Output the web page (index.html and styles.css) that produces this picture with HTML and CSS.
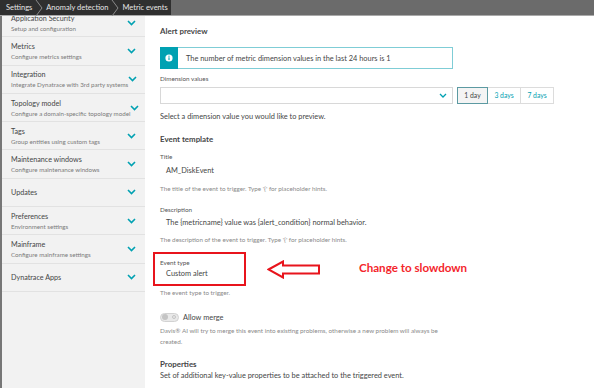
FILE: index.html
```html
<html>
    <head>
        <title>Metric events</title>
        <link rel="stylesheet" href="styles.css">
    </head>
    <body>
        <div class="topbar">
            <nav class="crumbs">
                <span class="crumb">Settings</span>
                <svg class="crumb-sep" width="8" height="16" viewBox="0 0 8 16"><polyline points="1,0 7,8 1,16" fill="none" stroke="#8a8a8a" stroke-width="1"/></svg>
                <span class="crumb">Anomaly detection</span>
                <svg class="crumb-sep" width="8" height="16" viewBox="0 0 8 16"><polyline points="1,0 7,8 1,16" fill="none" stroke="#8a8a8a" stroke-width="1"/></svg>
                <span class="crumb last">Metric events</span>
            </nav>
        </div>
        <div class="page">
            <aside class="sidebar">
                <ul class="menu">
                    <li class="menu-item">
                        <div><div class="menu-title">Application Security</div><div class="menu-sub">Setup and configuration</div></div>
                        <svg class="chev" width="9" height="6" viewBox="0 0 9 6"><polyline points="1,1 4.5,4.5 8,1" fill="none" stroke="#00a1b2" stroke-width="1.6"/></svg>
                    </li>
                    <li class="menu-item">
                        <div><div class="menu-title">Metrics</div><div class="menu-sub">Configure metrics settings</div></div>
                        <svg class="chev" width="9" height="6" viewBox="0 0 9 6"><polyline points="1,1 4.5,4.5 8,1" fill="none" stroke="#00a1b2" stroke-width="1.6"/></svg>
                    </li>
                    <li class="menu-item">
                        <div><div class="menu-title">Integration</div><div class="menu-sub">Integrate Dynatrace with 3rd party systems</div></div>
                        <svg class="chev" width="9" height="6" viewBox="0 0 9 6"><polyline points="1,1 4.5,4.5 8,1" fill="none" stroke="#00a1b2" stroke-width="1.6"/></svg>
                    </li>
                    <li class="menu-item">
                        <div><div class="menu-title">Topology model</div><div class="menu-sub">Configure a domain-specific topology model</div></div>
                        <svg class="chev" width="9" height="6" viewBox="0 0 9 6"><polyline points="1,1 4.5,4.5 8,1" fill="none" stroke="#00a1b2" stroke-width="1.6"/></svg>
                    </li>
                    <li class="menu-item">
                        <div><div class="menu-title">Tags</div><div class="menu-sub">Group entities using custom tags</div></div>
                        <svg class="chev" width="9" height="6" viewBox="0 0 9 6"><polyline points="1,1 4.5,4.5 8,1" fill="none" stroke="#00a1b2" stroke-width="1.6"/></svg>
                    </li>
                    <li class="menu-item">
                        <div><div class="menu-title">Maintenance windows</div><div class="menu-sub">Configure maintenance windows</div></div>
                        <svg class="chev" width="9" height="6" viewBox="0 0 9 6"><polyline points="1,1 4.5,4.5 8,1" fill="none" stroke="#00a1b2" stroke-width="1.6"/></svg>
                    </li>
                    <li class="menu-item">
                        <div><div class="menu-title">Updates</div></div>
                        <svg class="chev" width="9" height="6" viewBox="0 0 9 6"><polyline points="1,1 4.5,4.5 8,1" fill="none" stroke="#00a1b2" stroke-width="1.6"/></svg>
                    </li>
                    <li class="menu-item">
                        <div><div class="menu-title">Preferences</div><div class="menu-sub">Environment settings</div></div>
                        <svg class="chev" width="9" height="6" viewBox="0 0 9 6"><polyline points="1,1 4.5,4.5 8,1" fill="none" stroke="#00a1b2" stroke-width="1.6"/></svg>
                    </li>
                    <li class="menu-item">
                        <div><div class="menu-title">Mainframe</div><div class="menu-sub">Configure mainframe settings</div></div>
                        <svg class="chev" width="9" height="6" viewBox="0 0 9 6"><polyline points="1,1 4.5,4.5 8,1" fill="none" stroke="#00a1b2" stroke-width="1.6"/></svg>
                    </li>
                    <li class="menu-item">
                        <div><div class="menu-title">Dynatrace Apps</div></div>
                        <svg class="chev" width="9" height="6" viewBox="0 0 9 6"><polyline points="1,1 4.5,4.5 8,1" fill="none" stroke="#00a1b2" stroke-width="1.6"/></svg>
                    </li>
                </ul>
            </aside>
            <main class="content">
                <h3 class="section-title">Alert preview</h3>
                <div class="info-box">
                    <div class="info-icon">
                        <svg width="8" height="8" viewBox="0 0 8 8"><circle cx="4" cy="4" r="3.6" fill="#fff"/><rect x="3.45" y="3.3" width="1.1" height="2.8" fill="#00a1b2"/><circle cx="4" cy="2.2" r="0.6" fill="#00a1b2"/></svg>
                    </div>
                    <div class="info-text">The number of metric dimension values in the last 24 hours is 1</div>
                </div>
                <div class="label label-dim">Dimension values</div>
                <div class="select-row">
                    <div class="select">
                        <svg width="8" height="5" viewBox="0 0 8 5"><polyline points="1,1 4,4 7,1" fill="none" stroke="#00a1b2" stroke-width="1.3"/></svg>
                    </div>
                    <div class="range">
                        <span class="range-btn active">1 day</span>
                        <span class="range-btn">3 days</span>
                        <span class="range-btn">7 days</span>
                    </div>
                </div>
                <p class="text text-select">Select a dimension value you would like to preview.</p>

                <h3 class="section-title section-event">Event template</h3>
                <div class="label label-title">Title</div>
                <div class="value value-title">AM_DiskEvent</div>
                <div class="hint hint-title">The title of the event to trigger. Type '{' for placeholder hints.</div>

                <div class="label label-desc">Description</div>
                <div class="value value-desc">The {metricname} value was {alert_condition} normal behavior.</div>
                <div class="hint hint-desc">The description of the event to trigger. Type '{' for placeholder hints.</div>

                <div class="marked-row">
                    <div class="marked">
                        <div class="label">Event type</div>
                        <div class="value value-type">Custom alert</div>
                    </div>
                    <div class="callout">
                        <svg class="arrow" width="54" height="19"><polygon points="1.5,9.5 16,1.5 16,5.5 52,5.5 52,13.5 16,13.5 16,17.5" fill="#fff" stroke="#e8141c" stroke-width="2"/></svg>
                        <span class="note">Change to slowdown</span>
                    </div>
                </div>
                <div class="hint hint-type">The event type to trigger.</div>

                <div class="toggle-row">
                    <span class="toggle"><span class="knob"></span><span class="off-mark"></span></span>
                    <span class="toggle-label">Allow merge</span>
                </div>
                <div class="hint hint-merge">Davis® AI will try to merge this event into existing problems, otherwise a new problem will always be<br>created.</div>

                <h4 class="props-title">Properties</h4>
                <p class="text props-text">Set of additional key-value properties to be attached to the triggered event.</p>
            </main>
        </div>
    </body>
</html>
```

FILE: styles.css
```css
body{
    margin: 0;
    font-family: Lato, "Open Sans", sans-serif;
    color: #454646;
    background: #fff;
    overflow: hidden;
}
.topbar{
    height: 15px;
    background: #6b6b6b;
    border-top: 1px solid #3a3a3a;
    border-bottom: 1px solid #a9a9a9;
    display: flex;
    margin-top: -1px;
}
.crumbs{
    display: flex;
    align-items: center;
    background: #2f2f2f;
    padding-left: 6px;
    padding-right: 3px;
}
.crumb{
    color: #e6e6e6;
    font-size: 7.5px;
    line-height: 15px;
}
.crumb-sep{
    margin: 0 3px;
}
.page{
    display: flex;
    height: 372px;
}
.sidebar{
    width: 143px;
    background: #f2f2f2;
    border-left: 2px solid #777;
    overflow: hidden;
    flex-shrink: 0;
}
.menu{
    list-style: none;
    margin: -7px 0 0 0;
    padding: 0;
}
.menu-item{
    height: 28.3px;
    box-sizing: border-box;
    border-bottom: 1px solid #e2e2e2;
    display: flex;
    align-items: center;
    justify-content: space-between;
    padding: 0 9px 0 9px;
}
.menu-title{
    font-size: 7.2px;
    line-height: 11px;
    color: #454646;
}
.menu-sub{
    font-size: 6.2px;
    line-height: 9px;
    color: #7a7a7a;
    white-space: nowrap;
}
.chev{
    flex-shrink: 0;
}
.content{
    flex: 1;
    padding: 9px 0 0 15px;
    overflow: hidden;
}
.section-title{
    margin: 0;
    font-size: 7.9px;
    line-height: 12px;
    font-weight: bold;
    color: #454646;
}
.info-box{
    margin-top: 10px;
    width: 293px;
    height: 22px;
    box-sizing: border-box;
    border: 1px solid #7fcdd6;
    display: flex;
    align-items: center;
}
.info-icon{
    width: 18px;
    height: 22px;
    margin: -1px 0 -1px -1px;
    background: #00a1b2;
    display: flex;
    align-items: center;
    justify-content: center;
}
.info-text{
    margin-left: 8px;
    font-size: 7.4px;
}
.label{
    font-size: 6.3px;
    line-height: 10px;
    color: #555;
}
.label-dim{
    margin-top: 5px;
}
.select-row{
    margin-top: 3px;
    display: flex;
    align-items: center;
}
.select{
    width: 293px;
    height: 17px;
    box-sizing: border-box;
    border: 1px solid #d8d8d8;
    display: flex;
    align-items: center;
    justify-content: flex-end;
    padding-right: 5px;
}
.range{
    display: flex;
    margin-left: 5px;
}
.range-btn{
    width: 34px;
    height: 17px;
    box-sizing: border-box;
    border: 1px solid #dcdcdc;
    font-size: 6.8px;
    line-height: 15px;
    color: #00a1b2;
    text-align: center;
    margin-left: -1px;
}
.range-btn.active{
    width: 31px;
    border-color: #5c9aa2;
    background: #f4f4f4;
    color: #454646;
    position: relative;
}
.text{
    margin: 0;
    font-size: 7.4px;
    line-height: 12px;
}
.text-select{
    margin-top: 7px;
}
.section-event{
    margin-top: 10px;
}
.label-title{
    margin-top: 7px;
}
.value{
    font-size: 7.4px;
    line-height: 12px;
    padding-left: 6px;
    color: #454646;
}
.value-title{
    margin-top: 3px;
}
.hint{
    font-size: 6.3px;
    line-height: 10px;
    color: #8a8a8a;
}
.hint-title{
    margin-top: 7px;
}
.label-desc{
    margin-top: 11px;
}
.value-desc{
    margin-top: 2px;
}
.hint-desc{
    margin-top: 6px;
}
.marked-row{
    margin-top: 7px;
    margin-left: -7px;
    display: flex;
    align-items: center;
}
.marked{
    flex: none;
    width: 93px;
    height: 34px;
    box-sizing: border-box;
    border: 2px solid #e8141c;
    padding: 4px 0 0 5px;
}
.callout{
    display: flex;
    align-items: center;
    margin-left: 21px;
}
.arrow{
    display: block;
}
.note{
    margin-left: 38px;
    margin-top: -3px;
    font-size: 11.6px;
    font-weight: bold;
    color: #f4262c;
    white-space: nowrap;
}
.hint-type{
    margin-top: 2px;
}
.toggle-row{
    margin-top: 13px;
    height: 12px;
    display: flex;
    align-items: center;
}
.toggle{
    width: 19px;
    height: 9px;
    box-sizing: border-box;
    border: 1px solid #d2d2d2;
    border-radius: 5px;
    background: #e9e9e9;
    display: flex;
    align-items: center;
    justify-content: space-between;
    padding: 0 2px 0 1px;
}
.knob{
    width: 6px;
    height: 6px;
    border-radius: 50%;
    background: #c4c4c4;
}
.off-mark{
    width: 2px;
    height: 2px;
    border-radius: 50%;
    border: 1px solid #c4c4c4;
}
.toggle-label{
    margin-left: 4px;
    font-size: 7.4px;
}
.hint-merge{
    margin-top: 2px;
    line-height: 11px;
}
.props-title{
    margin: 11px 0 0 0;
    font-size: 7.9px;
    line-height: 12px;
    font-weight: bold;
    color: #454646;
}
.props-text{
    margin-top: 0;
}
```
